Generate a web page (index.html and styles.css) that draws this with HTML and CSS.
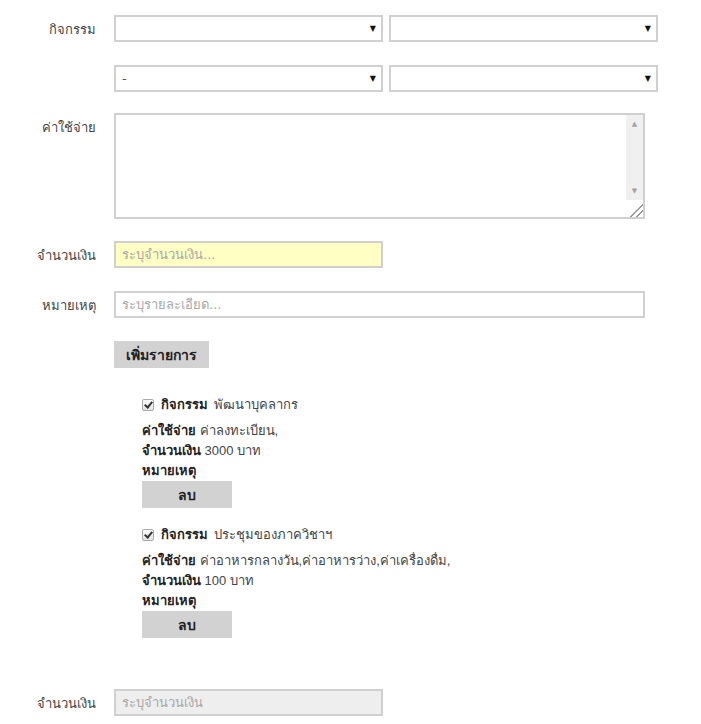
FILE: index.html
```html
<!DOCTYPE html>
<html lang="th">
<head>
  <meta charset="UTF-8">
  <title>บันทึกค่าใช้จ่าย</title>
  <link rel="stylesheet" href="styles.css">
</head>
<body>

  <form class="expense-form">
    <!-- activity -->
    <div class="row">
      <label class="label">กิจกรรม</label>
      <div class="pair">
        <div class="select-box"><select><option></option></select></div>
        <div class="select-box"><select><option></option></select></div>
      </div>
    </div>

    <div class="row">
      <span class="label"></span>
      <div class="pair">
        <div class="select-box"><select><option>-</option></select></div>
        <div class="select-box"><select><option></option></select></div>
      </div>
    </div>

    <!-- expense detail -->
    <div class="row row-top">
      <label class="label">ค่าใช้จ่าย</label>
      <div class="textarea-box">
        <textarea></textarea>
        <div class="scrollbar">
          <span class="arrow">▲</span>
          <span class="arrow">▼</span>
          <span class="grip"></span>
        </div>
      </div>
    </div>

    <div class="row">
      <label class="label">จำนวนเงิน</label>
      <input type="text" class="field short highlight" placeholder="ระบุจำนวนเงิน...">
    </div>

    <div class="row">
      <label class="label">หมายเหตุ</label>
      <input type="text" class="field wide" placeholder="ระบุรายละเอียด...">
    </div>

    <div class="row">
      <span class="label"></span>
      <div><button type="button" class="btn">เพิ่มรายการ</button></div>
    </div>

    <!-- added items -->
    <div class="row">
      <span class="label"></span>
      <div class="items">
        <div class="item">
          <div class="item-head">
            <input type="checkbox" class="check" checked>
            <b>กิจกรรม</b>
            <span>พัฒนาบุคลากร</span>
          </div>
          <div><b>ค่าใช้จ่าย</b> ค่าลงทะเบียน,</div>
          <div><b>จำนวนเงิน</b> 3000 บาท</div>
          <div><b>หมายเหตุ</b></div>
          <button type="button" class="btn btn-del">ลบ</button>
        </div>

        <div class="item">
          <div class="item-head">
            <input type="checkbox" class="check" checked>
            <b>กิจกรรม</b>
            <span>ประชุมของภาควิชาฯ</span>
          </div>
          <div><b>ค่าใช้จ่าย</b> ค่าอาหารกลางวัน,ค่าอาหารว่าง,ค่าเครื่องดื่ม,</div>
          <div><b>จำนวนเงิน</b> 100 บาท</div>
          <div><b>หมายเหตุ</b></div>
          <button type="button" class="btn btn-del">ลบ</button>
        </div>
      </div>
    </div>

    <div class="row total">
      <label class="label">จำนวนเงิน</label>
      <input type="text" class="field short readonly" placeholder="ระบุจำนวนเงิน" readonly>
    </div>
  </form>

</body>
</html>
```

FILE: styles.css
```css
body {
  margin: 0;
  background: #ffffff;
  font-family: Tahoma, "DejaVu Sans", sans-serif;
  font-size: 13px;
  color: #333;
}

.expense-form {
  padding-top: 15px;
}

.row {
  display: grid;
  grid-template-columns: 96px 1fr;
  column-gap: 18px;
  align-items: center;
  margin-bottom: 23px;
  line-height: 18px;
}

.row-top {
  align-items: start;
  margin-top: -2px;
  margin-bottom: 22px;
}

.row-top .label {
  padding-top: 6px;
}

.label {
  text-align: right;
  color: #444;
  padding-top: 2px;
}

.pair {
  display: flex;
  gap: 6px;
}

.select-box {
  position: relative;
  width: 269px;
}

.select-box select {
  display: block;
  width: 100%;
  height: 27px;
  box-sizing: border-box;
  border: 2px solid #d0d0d0;
  background: #fff;
  padding: 0 6px;
  font: inherit;
  color: #555;
  appearance: none;
  -webkit-appearance: none;
  outline: none;
}

.select-box::after {
  content: "▼";
  position: absolute;
  right: 7px;
  top: 5px;
  font-size: 8px;
  color: #111;
  pointer-events: none;
}

.textarea-box {
  display: flex;
  width: 531px;
  height: 106px;
  box-sizing: border-box;
  border: 2px solid #d0d0d0;
  background: #fff;
}

.textarea-box textarea {
  flex: 1;
  border: none;
  resize: none;
  outline: none;
  font: inherit;
}

.scrollbar {
  width: 17px;
  background: #f0f0f0;
  display: flex;
  flex-direction: column;
  align-items: center;
}

.arrow {
  font-size: 7px;
  color: #a3a3a3;
  line-height: 17px;
}

.arrow:first-child {
  margin-top: 1px;
}

.arrow + .arrow {
  margin-top: auto;
}

.grip {
  width: 17px;
  height: 17px;
  background:
    linear-gradient(135deg, transparent 60%, #999 60%, #999 66%, transparent 66%, transparent 78%, #999 78%, #999 84%, transparent 84%),
    #fff;
}

.field {
  display: block;
  height: 27px;
  box-sizing: border-box;
  border: 2px solid #d0d0d0;
  padding: 0 6px;
  font: inherit;
  color: #333;
  outline: none;
}

.field::placeholder {
  color: #a8a8a8;
}

.short {
  width: 269px;
}

.wide {
  width: 531px;
}

.highlight {
  background: #ffffc4;
}

.readonly {
  background: #eeeeee;
}

.btn {
  display: block;
  border: none;
  background: #d2d2d2;
  font: inherit;
  font-weight: bold;
  font-size: 14px;
  color: #222;
  height: 27px;
  padding: 0 12px;
  cursor: pointer;
}

.items {
  padding-left: 28px;
  padding-top: 4px;
}

.item {
  font-family: "Liberation Sans", Arial, sans-serif;
  line-height: 20px;
  color: #444;
  margin-bottom: 17px;
}

.item b {
  color: #222;
}

.item-head {
  display: flex;
  align-items: center;
  gap: 6px;
  margin-bottom: 6px;
}

.check {
  appearance: none;
  -webkit-appearance: none;
  position: relative;
  margin: 0 1px 0 0;
  width: 12px;
  height: 12px;
  border: 1px solid #aaa;
  border-radius: 2px;
  background: linear-gradient(#fdfdfd, #e2e2e2);
}

.check:checked::after {
  content: "";
  position: absolute;
  left: 3px;
  top: 0;
  width: 3px;
  height: 6px;
  border-right: 2px solid #333;
  border-bottom: 2px solid #333;
  transform: rotate(40deg);
}

.btn-del {
  width: 90px;
}

.total {
  margin-top: 34px;
}
```
